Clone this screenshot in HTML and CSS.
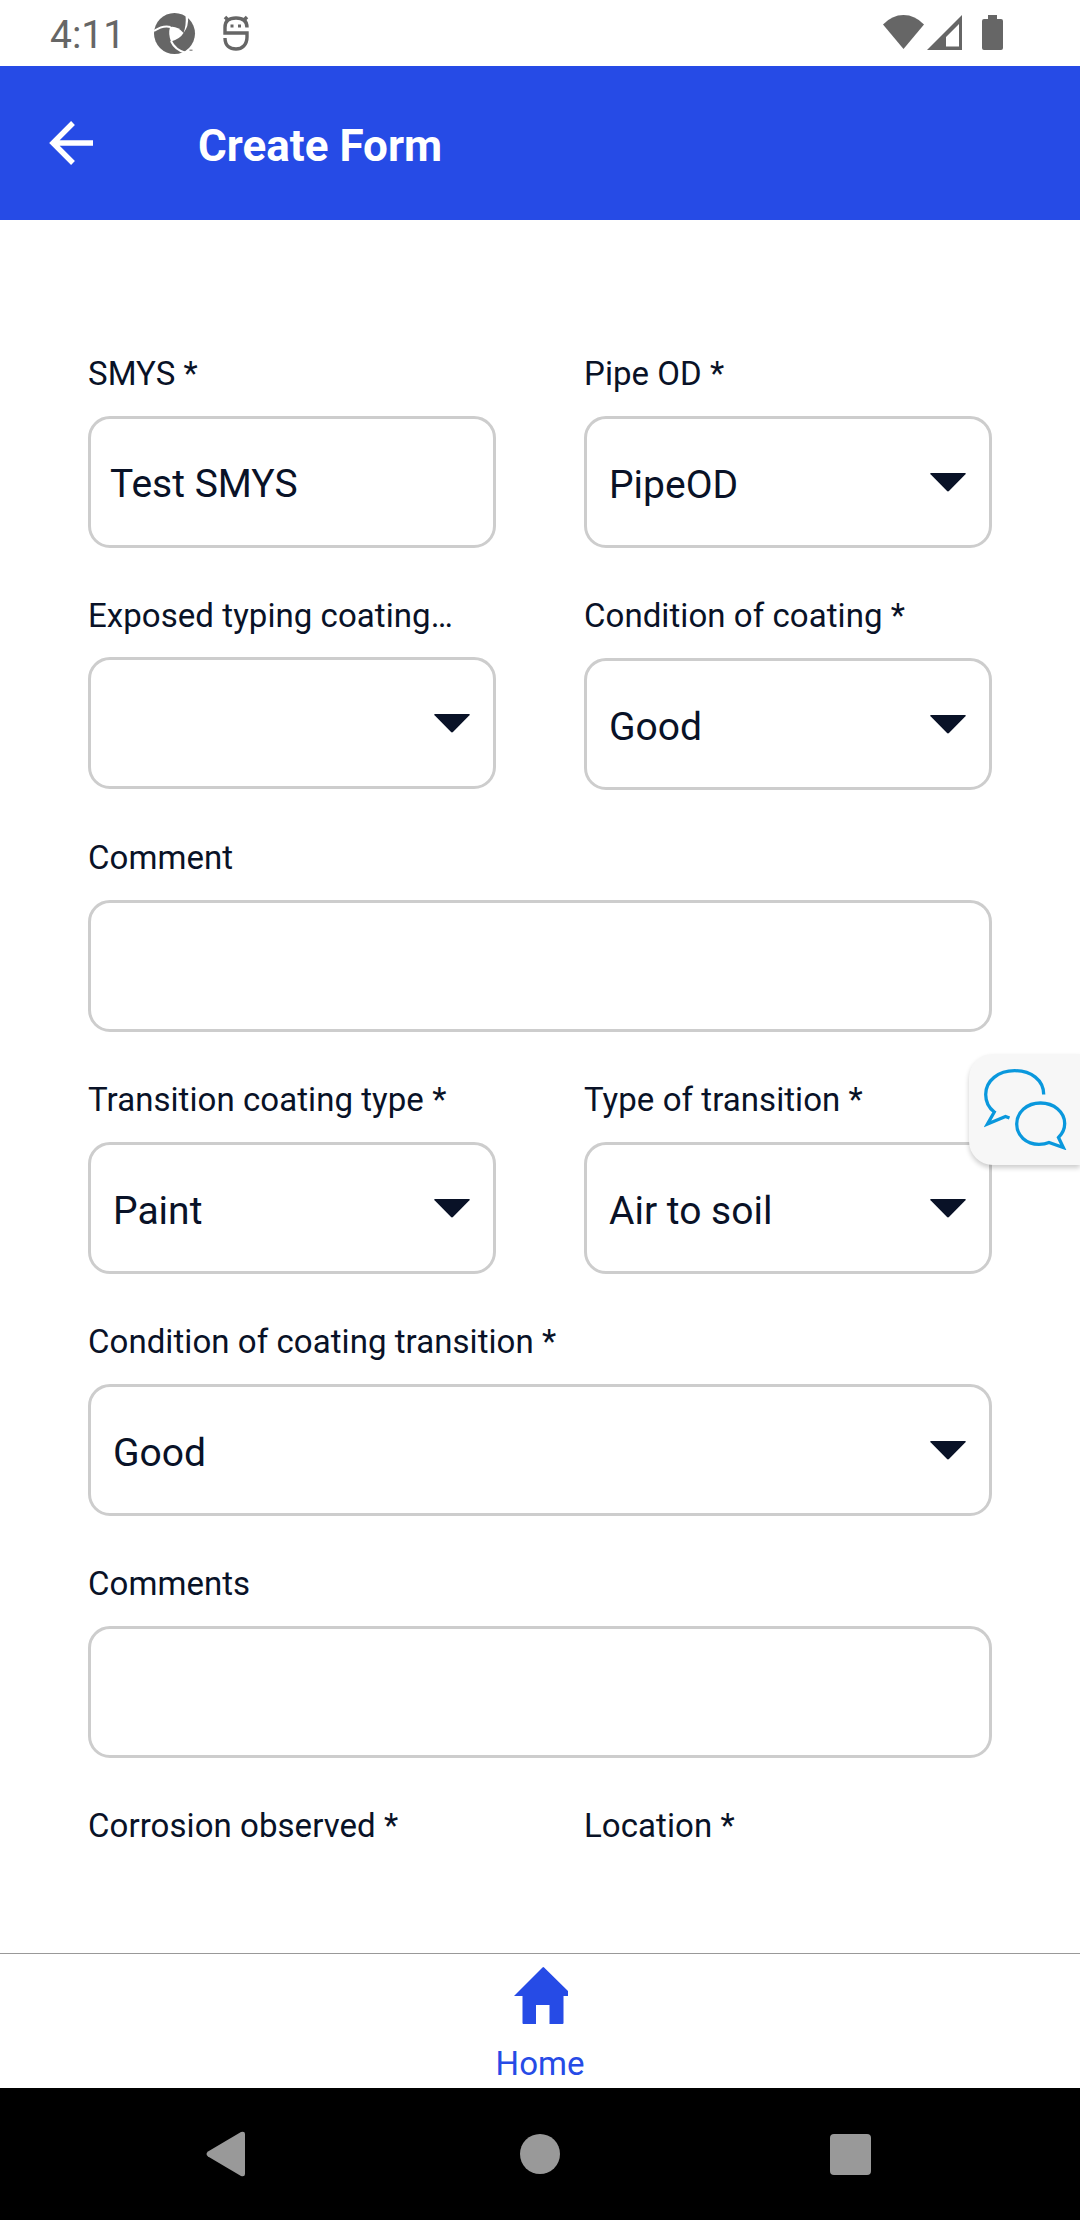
FILE: index.html
```html
<!DOCTYPE html>
<html lang="en">
<head>
<meta charset="utf-8">
<title>Create Form</title>
<link rel="stylesheet" href="styles.css">
</head>
<body>
<svg width="0" height="0" class="defs"><symbol id="caret" viewBox="0 0 36 19"><path d="M1 0H35Q36.500 .4 35.200 1.600L19.200 17.800Q18 19 16.800 17.800L.8 1.600Q-.5 .4 1 0Z"/></symbol></svg>
<div class="screen">
  <div class="status">
    <span class="clock">4:11</span>
    <svg class="aperture" viewBox="0 0 42 42" width="42" height="42">
      <circle cx="20.500" cy="20.500" r="20.500" fill="#666"/>
      <path d="M16 14Q23 12.500 29.500 20Q26 26 17 28.500Q14 21 16 14Z" fill="#fff"/>
      <g fill="none" stroke="#fff" stroke-width="2"><path d="M0 18Q9 12 16.500 14"/><path d="M17 28Q21 37 32 40"/></g>
      <path d="M31.500 2L34 4Q35 13 29.500 20Q32.500 12 31.500 2Z" fill="#fff"/>
      <path d="M35.500 36.500h3v1.500h-3z" fill="#999"/>
    </svg>
    <svg class="sauce" viewBox="0 0 26 36" width="26" height="36" fill="none" stroke="#666">
      <path d="M24 12.500C24 5.500 20 3 13 3S2 5.500 2 12.500V18H24V22C24 30 19 34 13 34S2 31 2 23" stroke-width="3.400"/>
      <path d="M2 2L6 6M24 2L20 6" stroke-width="3.500"/><path d="M7.500 11h3M15 11h3" stroke-width="3"/>
    </svg>
    <div class="signals">
      <svg viewBox="0 0 120 36" width="120" height="36" fill="#666">
        <path d="M0 9.500Q9 0 20.500 0T41 9.500L20.500 34Z"/>
        <path fill-rule="evenodd" d="M79 0V35H44ZM76 9L63 22V31.500H76Z"/>
        <path d="M105 0h9v4h4q2 0 2 2v27q0 2-2 2h-17q-2 0-2-2V6q0-2 2-2h4z"/>
      </svg>
    </div>
  </div>
  <header class="appbar">
    <svg viewBox="0 0 44 44" width="44" height="44"><path d="M24 2L4 22L24 42M3 22H44" fill="none" stroke="#fff" stroke-width="5.400"/></svg>
    <h1>Create Form</h1>
  </header>
  <main class="form">
    <div class="field"><label>SMYS *</label><div class="box input">Test SMYS</div></div>
    <div class="field"><label>Pipe OD *</label><div class="box">PipeOD<svg class="caret"><use href="#caret"/></svg></div></div>
    <div class="field raised"><label>Exposed typing coating…</label><div class="box"><svg class="caret"><use href="#caret"/></svg></div></div>
    <div class="field"><label>Condition of coating *</label><div class="box">Good<svg class="caret"><use href="#caret"/></svg></div></div>
    <div class="field wide"><label>Comment</label><div class="box input"></div></div>
    <div class="field"><label>Transition coating type *</label><div class="box">Paint<svg class="caret"><use href="#caret"/></svg></div></div>
    <div class="field"><label>Type of transition *</label><div class="box">Air to soil<svg class="caret"><use href="#caret"/></svg></div></div>
    <div class="field wide"><label>Condition of coating transition *</label><div class="box">Good<svg class="caret"><use href="#caret"/></svg></div></div>
    <div class="field wide"><label>Comments</label><div class="box input"></div></div>
    <div class="field"><label>Corrosion observed *</label></div>
    <div class="field"><label>Location *</label></div>
  </main>
  <nav class="tabs">
    <svg viewBox="0 0 54 57" width="54" height="57"><path d="M28.500 .4Q29.300 -.3 30.100 .4L54 24V29H49.500V56Q49.500 57 48.500 57H35.500V38H22V57H9.500Q8.500 57 8.500 56V29H0Z" fill="#264be6"/></svg>
    <span>Home</span>
  </nav>
  <div class="sysnav">
    <svg viewBox="0 0 39 46" width="39" height="46"><path d="M2 20.500L35 1Q39 0 39 3V43Q39 46 35 45L2 25.500Q-1 23 2 20.500Z"/></svg>
    <svg class="home-key" viewBox="0 0 40 40" width="40" height="40"><circle cx="20" cy="20" r="20"/></svg>
    <svg class="recent-key" viewBox="0 0 41 41" width="41" height="41"><rect width="41" height="41" rx="4"/></svg>
  </div>
  <div class="chat">
    <svg viewBox="0 0 84 82" width="84" height="82" fill="none" stroke="#0a98dd" stroke-width="3.300">
      <path d="M59.700 26.500C59.700 12 47 2.700 30.700 2.700S1.700 12.500 1.700 26.500C1.700 34 5 40 10.300 44L3.500 56L21.500 48.500L25.500 50"/>
      <path d="M74.500 69.500L79.300 79.500L65 74.500C62 75.800 58.500 76.300 55 76.300C42 76.300 32.700 67.500 32.700 56C32.700 44 43 35 56.500 35S80.700 44 80.700 55.500C80.700 61 78 66 74.500 69.500Z"/>
    </svg>
  </div>
</div>
</body>
</html>
```
FILE: styles.css
```css
* { box-sizing: border-box; }
body { margin: 0; background: #fff; color: #091227; font-family: Roboto, sans-serif; }
svg { display: block; flex: none; }
.defs { position: absolute; }
.screen { position: relative; width: 1080px; height: 2220px; display: flex; flex-direction: column; overflow: hidden; }
.status { height: 66px; display: flex; align-items: flex-start; padding-left: 50px; color: #666; }
.clock { width: 104px; font-size: 39px; line-height: 46px; padding-top: 12px; }
.aperture { margin-top: 13px; }
.sauce { margin: 15px 0 0 27px; }
.signals { margin: 15px 77px 0 auto; }
.appbar { height: 154px; background: #264be6; color: #fff; display: flex; align-items: center; padding-left: 49px; }
.appbar h1 { margin: 6px 0 0 105px; font-size: 44px; line-height: 54px; font-weight: 700; }
.form { flex: 1; display: grid; grid-template-columns: 408px 408px; column-gap: 88px; row-gap: 48px; align-content: start; padding: 134px 88px 0; }
.field { display: flex; flex-direction: column; gap: 22px; }
.wide { grid-column: 1 / -1; }
label { font-size: 33px; line-height: 40px; letter-spacing: .06px; white-space: nowrap; }
.box { height: 132px; border: 3px solid #cdcdcd; border-radius: 22px; padding: 5px 22px 0; display: flex; align-items: center; justify-content: space-between; font-size: 39px; line-height: 46px; }
.input { padding: 3px 19px 0; }
.raised { gap: 21px; }
.caret { width: 36px; height: 19px; margin: -5px 1px 0 auto; fill: #091227; }
.tabs { height: 135px; border-top: 1px solid #999; display: flex; flex-direction: column; align-items: center; padding-top: 13px; color: #264be6; font-size: 33px; line-height: 40px; }
.tabs svg { margin-left: 2px; }
.tabs span { margin-top: 20px; }
.sysnav { height: 132px; background: #000; display: flex; align-items: center; padding-left: 206px; fill: #999; }
.home-key { margin-left: 275px; }
.recent-key { margin-left: 270px; }
.chat { position: absolute; right: 0; top: 1054px; width: 111px; height: 111px; padding: 14px 0 0 15px; background: #f7f7f7; border-radius: 24px 0 0 24px; box-shadow: 0 3px 5px rgba(0,0,0,.2); }
```
